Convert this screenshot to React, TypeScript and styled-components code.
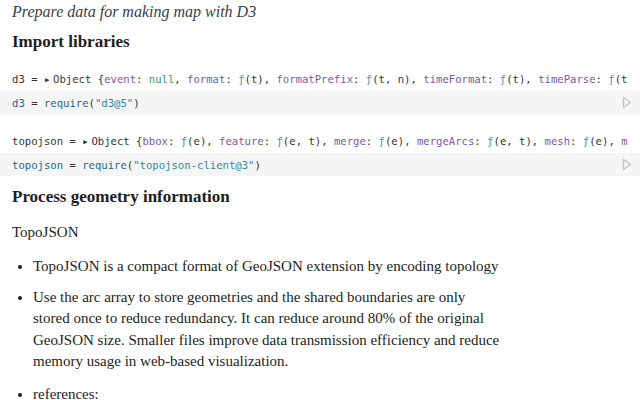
import React from "react";
import styled, { createGlobalStyle } from "styled-components";

const Global = createGlobalStyle`
  html, body { margin: 0; padding: 0; background: #fff; }
  body { overflow: hidden; width: 640px; height: 400px; }
`;

const Page = styled.div`
  width: 640px;
  height: 400px;
  overflow: hidden;
  font-family: "Liberation Serif", serif;
  color: #1b1e23;
`;

const Prose = styled.div`
  padding: 0 12px;
`;

const Subtitle = styled.h2`
  margin: 0;
  padding-top: 1px;
  font-style: italic;
  font-weight: normal;
  font-size: 16px;
  line-height: 22px;
  color: #3b3e44;
`;

const Heading = styled.h2<{ $top: number }>`
  margin: ${(p) => p.$top}px 0 0;
  font-size: 17px;
  font-weight: bold;
  line-height: 22px;
`;

const Cell = styled.div<{ $top: number }>`
  margin-top: ${(p) => p.$top}px;
`;

const Output = styled.div`
  padding: 0 12px;
  height: 20px;
  font-family: "DejaVu Sans Mono", monospace;
  font-size: 10.6px;
  line-height: 20px;
  white-space: nowrap;
  overflow: hidden;
  color: #333;
`;

const Code = styled.div`
  display: flex;
  align-items: center;
  justify-content: space-between;
  margin-top: 2px;
  height: 23px;
  padding: 0 8px 0 12px;
  background: #f5f5f5;
  font-family: "DejaVu Sans Mono", monospace;
  font-size: 10.6px;
  white-space: nowrap;
  color: #333;
`;

const Tok = styled.span<{ $c: string }>`
  color: ${(p) => p.$c};
`;

const Caret = styled.span`
  font-size: 7px;
  vertical-align: 1px;
  margin: 0 4px 0 1px;
`;

const Para = styled.p<{ $top: number }>`
  margin: ${(p) => p.$top}px 0 0;
  font-size: 15px;
  line-height: 22px;
`;

const List = styled.ul`
  margin: 0;
  padding: 0 0 0 21px;
  font-size: 15px;
  line-height: 21.5px;
  max-width: 470px;
`;

const Item = styled.li<{ $top: number }>`
  margin-top: ${(p) => p.$top}px;
  padding-left: 0;
`;

const KEY = "#7b56a8";
const FN = "#4a8fb8";
const NUL = "#3a9560";
const NAME = "#23698f";
const STR = "#2e8aa2";

const Run = () => (
  <svg width="10" height="13" viewBox="0 0 10 13">
    <path d="M1.5 1.5 L8.5 6.5 L1.5 11.5 Z" fill="none" stroke="#c4c4c4" strokeWidth="1.4" strokeLinejoin="round" />
  </svg>
);

const F = ({ args }: { args: string }) => (
  <>
    <Tok $c={FN}>ƒ</Tok>({args})
  </>
);

const K = ({ k }: { k: string }) => <Tok $c={KEY}>{k}</Tok>;

export default function App() {
  return (
    <Page>
      <Global />
      <Prose>
        <Subtitle>Prepare data for making map with D3</Subtitle>
        <Heading $top={8}>Import libraries</Heading>
      </Prose>

      <Cell $top={16}>
        <Output>
          d3 = <Caret>▶</Caret>Object {"{"}
          <K k="event" />: <Tok $c={NUL}>null</Tok>, <K k="format" />: <F args="t" />, <K k="formatPrefix" />:{" "}
          <F args="t, n" />, <K k="timeFormat" />: <F args="t" />, <K k="timeParse" />: <Tok $c={FN}>ƒ</Tok>(t
        </Output>
        <Code>
          <span>
            <Tok $c={NAME}>d3</Tok> = <Tok $c={NAME}>require</Tok>(<Tok $c={STR}>"d3@5"</Tok>)
          </span>
          <Run />
        </Code>
      </Cell>

      <Cell $top={17}>
        <Output>
          topojson = <Caret>▶</Caret>Object {"{"}
          <K k="bbox" />: <F args="e" />, <K k="feature" />: <F args="e, t" />, <K k="merge" />: <F args="e" />,{" "}
          <K k="mergeArcs" />: <F args="e, t" />, <K k="mesh" />: <F args="e" />, <K k="m" />
        </Output>
        <Code>
          <span>
            <Tok $c={NAME}>topojson</Tok> = <Tok $c={NAME}>require</Tok>(<Tok $c={STR}>"topojson-client@3"</Tok>)
          </span>
          <Run />
        </Code>
      </Cell>

      <Prose>
        <Heading $top={10}>Process geometry information</Heading>
        <Para $top={13}>TopoJSON</Para>
        <List>
          <Item $top={13}>TopoJSON is a compact format of GeoJSON extension by encoding topology</Item>
          <Item $top={9}>
            Use the arc array to store geometries and the shared boundaries are only stored once to reduce redundancy.
            It can reduce around 80% of the original GeoJSON size. Smaller files improve data transmission efficiency
            and reduce memory usage in web-based visualization.
          </Item>
          <Item $top={11}>references:</Item>
        </List>
      </Prose>
    </Page>
  );
}
